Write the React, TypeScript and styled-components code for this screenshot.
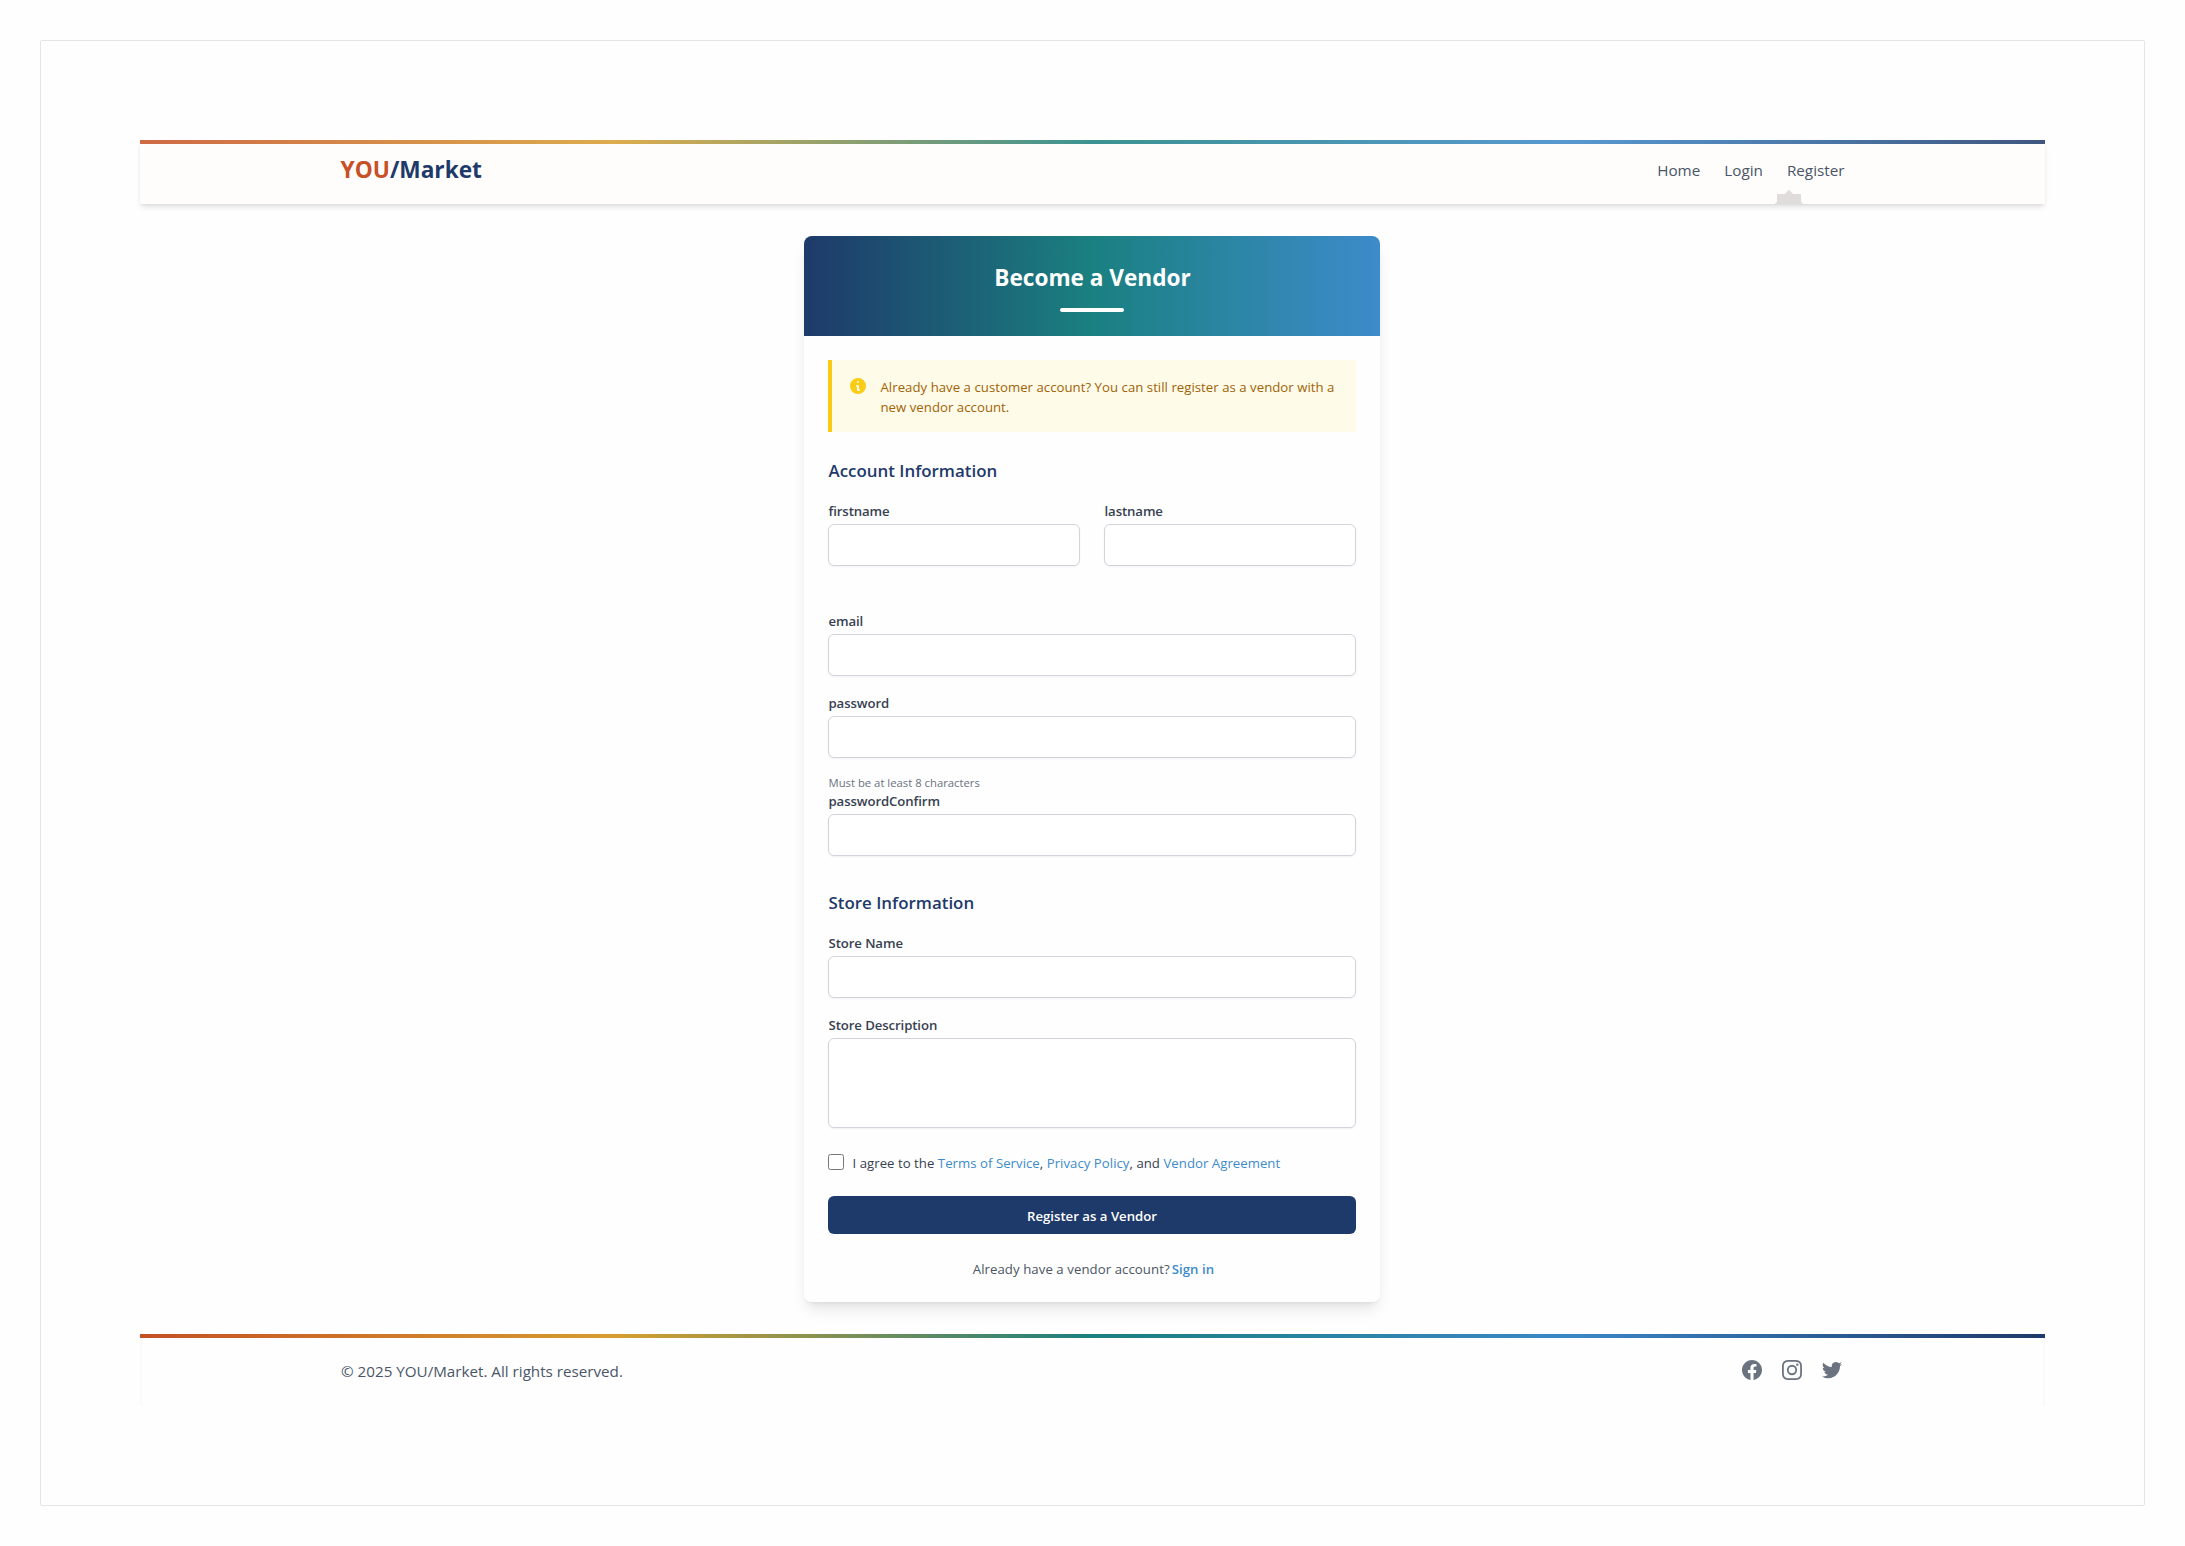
import React from "react";
import styled, { createGlobalStyle, css } from "styled-components";

const navy = "#1e3a6a";
const blue = "#3d8bcb";
const teal = "#1a8080";
const spectrum = `linear-gradient(to right, #c65024 0%, #d69e2e 25%, ${teal} 50%, #3a87c8 75%, ${navy} 100%)`;

const GlobalStyle = createGlobalStyle`
  *, *::before, *::after { box-sizing: border-box; }
  body {
    margin: 0;
    background: #fefefe;
    font-family: "Open Sans", "Noto Sans", sans-serif;
    color: #374151;
  }
  h1, h2, p { margin: 0; }
  a { text-decoration: none; color: inherit; }
`;

const body14 = css`
  font-size: 13.2px;
  line-height: 20px;
  letter-spacing: 0.03px;
`;

const Canvas = styled.div`
  height: 1546px;
  padding: 40px;
`;

const Frame = styled.div`
  height: 1466px;
  padding: 99px;
  border: 1px solid #e5e5e5;
  border-radius: 2px;
`;

const Container = styled.div`
  width: 100%;
  max-width: 1536px;
  margin: 0 auto;
  padding: 0 16px;
  display: flex;
  justify-content: space-between;
`;

const Header = styled.header`
  position: relative;
  height: 64px;
  padding-top: 12px;
  overflow: visible;
  background: #fefdfb;
  box-shadow: 0 4px 6px -1px rgba(0, 0, 0, 0.1), 0 2px 4px -2px rgba(0, 0, 0, 0.1);

  &::before {
    content: "";
    position: absolute;
    inset: 0 0 auto 0;
    height: 4px;
    background: ${spectrum};
    opacity: 0.85;
  }
`;

const Logo = styled.a`
  padding-top: 2px;
  font-size: 22.7px;
  line-height: 32px;
  font-weight: 700;
  color: ${navy};
`;

const LogoAccent = styled.span`
  color: #c85027;
`;

const Nav = styled.nav`
  display: flex;
  gap: 24px;
  height: 52px;
  padding-top: 6px;
`;

const NavLink = styled.a`
  position: relative;
  font-size: 15.25px;
  line-height: 24px;
  color: #4a5568;
`;

const StarClip = styled.span`
  position: absolute;
  left: -16px;
  top: 28px;
  width: 36px;
  height: 18px;
  overflow: hidden;

  svg { display: block; }
`;

const Main = styled.main`
  display: flex;
  justify-content: center;
  padding: 32px 1px 32px 0;
`;

const Card = styled.section`
  width: 576px;
  height: 1066px;
  border-radius: 8px;
  overflow: hidden;
  background: #fefefe;
  box-shadow: 0 10px 15px -3px rgba(0, 0, 0, 0.1), 0 4px 6px -4px rgba(0, 0, 0, 0.1);
`;

const CardHeader = styled.div`
  height: 100px;
  padding: 26px 24px 0;
  display: flex;
  flex-direction: column;
  align-items: center;
  background: linear-gradient(to right, ${navy}, ${teal} 50%, ${blue});
`;

const Title = styled.h1`
  padding-left: 1px;
  font-size: 22.6px;
  line-height: 32px;
  font-weight: 700;
  color: #fff;
`;

const TitleRule = styled.div`
  width: 64px;
  height: 4px;
  margin-top: 14px;
  border-radius: 2px;
  background: #fff;
`;

const Form = styled.form`
  padding: 24px;
`;

const Notice = styled.div`
  display: flex;
  gap: 12px;
  height: 72px;
  padding: 16px 16px 0;
  border-left: 4px solid #facc15;
  background: #fefce8;

  svg { flex: none; fill: #facc15; }
`;

const NoticeText = styled.p`
  ${body14}
  padding: 1px 0 0 0.5px;
  color: #a16207;
`;

const SectionTitle = styled.h2<{ $gap?: number }>`
  height: 28px;
  margin: ${(p) => p.$gap ?? 24}px 0 16px;
  padding: 1px 0 0 0.5px;
  font-size: 16.9px;
  line-height: 28px;
  font-weight: 600;
  color: ${navy};
`;

const NameRow = styled.div`
  display: grid;
  grid-template-columns: 1fr 1fr;
  gap: 24px;
  margin-bottom: 28px;
`;

const Field = styled.div`
  display: flex;
  flex-direction: column;
  gap: 4px;
  margin-bottom: 16px;
`;

const Label = styled.label`
  ${body14}
  height: 20px;
  padding: 1px 0 0 0.5px;
  letter-spacing: -0.1px;
  font-weight: 600;
`;

const control = css`
  display: block;
  width: 100%;
  padding: 8px 12px;
  border: 1px solid #d1d5db;
  border-radius: 6px;
  background: #fff;
  box-shadow: 0 1px 2px rgba(0, 0, 0, 0.05);
  font: inherit;
  outline: none;
`;

const Input = styled.input`
  ${control}
  height: 42px;
`;

const TextArea = styled.textarea`
  ${control}
  height: 90px;
  resize: none;
`;

const Hint = styled.p`
  height: 16px;
  padding: 1px 0 0 0.5px;
  font-size: 11.3px;
  line-height: 16px;
  color: #6b7280;
`;

const Agreement = styled.div`
  display: flex;
  gap: 8.5px;
  height: 20px;
  margin-top: 24px;
`;

const Checkbox = styled.input`
  width: 16px;
  height: 16px;
  margin: 2px 0 0;
`;

const AgreementText = styled.label`
  ${body14}
  padding-top: 1px;
`;

const TextLink = styled.a<{ $strong?: boolean }>`
  color: ${blue};
  font-weight: ${(p) => (p.$strong ? 600 : 400)};
`;

const Submit = styled.button`
  ${body14}
  display: block;
  width: 100%;
  height: 38px;
  margin-top: 24px;
  padding: 10px 16px 8px;
  border: 0;
  border-radius: 6px;
  background: ${navy};
  color: #fff;
  font-family: inherit;
  letter-spacing: 0;
  font-weight: 600;
`;

const SignIn = styled.p`
  ${body14}
  display: flex;
  justify-content: center;
  gap: 2px;
  height: 20px;
  margin-top: 24px;
  padding: 1px 0 0 3px;
  letter-spacing: 0.07px;
  color: #4b5563;
`;

const Footer = styled.footer`
  height: 72px;
  background: #fefefe;
  box-shadow: inset 0 2px 4px rgba(0, 0, 0, 0.05);

  &::before {
    content: "";
    display: block;
    height: 4px;
    background: ${spectrum};
  }
`;

const Copyright = styled.p`
  padding: 21px 0 0 0.5px;
  font-size: 15.2px;
  line-height: 24px;
  color: #4a5568;
`;

const Social = styled.div`
  display: flex;
  gap: 16px;
  padding: 20px 0.5px 0 0;

  svg { display: block; fill: #6b7280; }
`;

const socialIcons = [
  {
    name: "Facebook",
    d: "M22 12c0-5.523-4.477-10-10-10S2 6.477 2 12c0 4.991 3.657 9.128 8.438 9.878v-6.987h-2.54V12h2.54V9.797c0-2.506 1.492-3.89 3.777-3.89 1.094 0 2.238.195 2.238.195v2.46h-1.26c-1.243 0-1.63.771-1.63 1.562V12h2.773l-.443 2.89h-2.33v6.988C18.343 21.128 22 16.991 22 12z",
  },
  {
    name: "Instagram",
    d: "M12.315 2c2.43 0 2.784.013 3.808.06 1.064.049 1.791.218 2.427.465a4.902 4.902 0 011.772 1.153 4.902 4.902 0 011.153 1.772c.247.636.416 1.363.465 2.427.048 1.067.06 1.407.06 4.123v.08c0 2.643-.012 2.987-.06 4.043-.049 1.064-.218 1.791-.465 2.427a4.902 4.902 0 01-1.153 1.772 4.902 4.902 0 01-1.772 1.153c-.636.247-1.363.416-2.427.465-1.067.048-1.407.06-4.123.06h-.08c-2.643 0-2.987-.012-4.043-.06-1.064-.049-1.791-.218-2.427-.465a4.902 4.902 0 01-1.772-1.153 4.902 4.902 0 01-1.153-1.772c-.247-.636-.416-1.363-.465-2.427-.047-1.024-.06-1.379-.06-3.808v-.63c0-2.43.013-2.784.06-3.808.049-1.064.218-1.791.465-2.427a4.902 4.902 0 011.153-1.772A4.902 4.902 0 015.45 2.525c.636-.247 1.363-.416 2.427-.465C8.901 2.013 9.256 2 11.685 2h.63zm-.081 1.802h-.468c-2.456 0-2.784.011-3.807.058-.975.045-1.504.207-1.857.344-.467.182-.8.398-1.15.748-.35.35-.566.683-.748 1.15-.137.353-.3.882-.344 1.857-.047 1.023-.058 1.351-.058 3.807v.468c0 2.456.011 2.784.058 3.807.045.975.207 1.504.344 1.857.182.466.399.8.748 1.15.35.35.683.566 1.15.748.353.137.882.3 1.857.344 1.054.048 1.37.058 4.041.058h.08c2.597 0 2.917-.01 3.96-.058.976-.045 1.505-.207 1.858-.344.466-.182.8-.398 1.15-.748.35-.35.566-.683.748-1.15.137-.353.3-.882.344-1.857.048-1.055.058-1.37.058-4.041v-.08c0-2.597-.01-2.917-.058-3.96-.045-.976-.207-1.505-.344-1.858a3.097 3.097 0 00-.748-1.15 3.098 3.098 0 00-1.15-.748c-.353-.137-.882-.3-1.857-.344-1.023-.047-1.351-.058-3.807-.058zM12 6.865a5.135 5.135 0 110 10.27 5.135 5.135 0 010-10.27zm0 1.802a3.333 3.333 0 100 6.666 3.333 3.333 0 000-6.666zm5.338-3.205a1.2 1.2 0 110 2.4 1.2 1.2 0 010-2.4z",
  },
  {
    name: "Twitter",
    d: "M8.29 20.251c7.547 0 11.675-6.253 11.675-11.675 0-.178 0-.355-.012-.53A8.348 8.348 0 0022 5.92a8.19 8.19 0 01-2.357.646 4.118 4.118 0 001.804-2.27 8.224 8.224 0 01-2.605.996 4.107 4.107 0 00-6.993 3.743 11.65 11.65 0 01-8.457-4.287 4.106 4.106 0 001.27 5.477A4.072 4.072 0 012.8 9.713v.052a4.105 4.105 0 003.292 4.022 4.095 4.095 0 01-1.853.07 4.108 4.108 0 003.834 2.85A8.233 8.233 0 012 18.407a11.616 11.616 0 006.29 1.84",
  },
];

function TextField({ id, label, type = "text" }: { id: string; label: string; type?: string }) {
  return (
    <Field>
      <Label htmlFor={id}>{label}</Label>
      <Input id={id} type={type} />
    </Field>
  );
}

export default function App() {
  return (
    <Canvas>
      <GlobalStyle />
      <Frame>
        <Header>
          <Container>
            <Logo href="#"><LogoAccent>YOU</LogoAccent>/Market</Logo>
            <Nav>
              <NavLink href="#">Home</NavLink>
              <NavLink href="#">Login</NavLink>
              <NavLink href="#">
                Register
                <StarClip>
                  <svg width="36" height="36" viewBox="0 0 36 36" fill="#e0dcda">
                    <rect x="6" y="8" width="24" height="24" />
                    <path d="M18 3.7 34.3 20 18 36.3 1.7 20z" />
                  </svg>
                </StarClip>
              </NavLink>
            </Nav>
          </Container>
        </Header>
        <Main>
          <Card>
            <CardHeader>
              <Title>Become a Vendor</Title>
              <TitleRule />
            </CardHeader>
            <Form>
              <Notice>
                <svg width="20" height="20" viewBox="0 0 20 20">
                  <path fillRule="evenodd" clipRule="evenodd" d="M18 10a8 8 0 11-16 0 8 8 0 0116 0zm-7-4a1 1 0 11-2 0 1 1 0 012 0zM9 9a1 1 0 000 2v3a1 1 0 001 1h1a1 1 0 100-2v-3a1 1 0 00-1-1H9z" />
                </svg>
                <NoticeText>
                  Already have a customer account? You can still register as a vendor with a new vendor account.
                </NoticeText>
              </Notice>
              <SectionTitle>Account Information</SectionTitle>
              <NameRow>
                <TextField id="firstname" label="firstname" />
                <TextField id="lastname" label="lastname" />
              </NameRow>
              <TextField id="email" label="email" type="email" />
              <TextField id="password" label="password" type="password" />
              <Hint>Must be at least 8 characters</Hint>
              <TextField id="passwordConfirm" label="passwordConfirm" type="password" />
              <SectionTitle $gap={32}>Store Information</SectionTitle>
              <TextField id="storeName" label="Store Name" />
              <Field>
                <Label htmlFor="storeDescription">Store Description</Label>
                <TextArea id="storeDescription" />
              </Field>
              <Agreement>
                <Checkbox id="agree" type="checkbox" />
                <AgreementText htmlFor="agree">
                  I agree to the <TextLink href="#">Terms of Service</TextLink>,{" "}
                  <TextLink href="#">Privacy Policy</TextLink>, and{" "}
                  <TextLink href="#">Vendor Agreement</TextLink>
                </AgreementText>
              </Agreement>
              <Submit type="button">Register as a Vendor</Submit>
              <SignIn>
                <span>Already have a vendor account?</span>
                <TextLink href="#" $strong>Sign in</TextLink>
              </SignIn>
            </Form>
          </Card>
        </Main>
        <Footer>
          <Container>
            <Copyright>© 2025 YOU/Market. All rights reserved.</Copyright>
            <Social>
              {socialIcons.map((icon) => (
                <a key={icon.name} href="#" aria-label={icon.name}>
                  <svg width="24" height="24" viewBox="0 0 24 24">
                    <path fillRule="evenodd" clipRule="evenodd" d={icon.d} />
                  </svg>
                </a>
              ))}
            </Social>
          </Container>
        </Footer>
      </Frame>
    </Canvas>
  );
}
